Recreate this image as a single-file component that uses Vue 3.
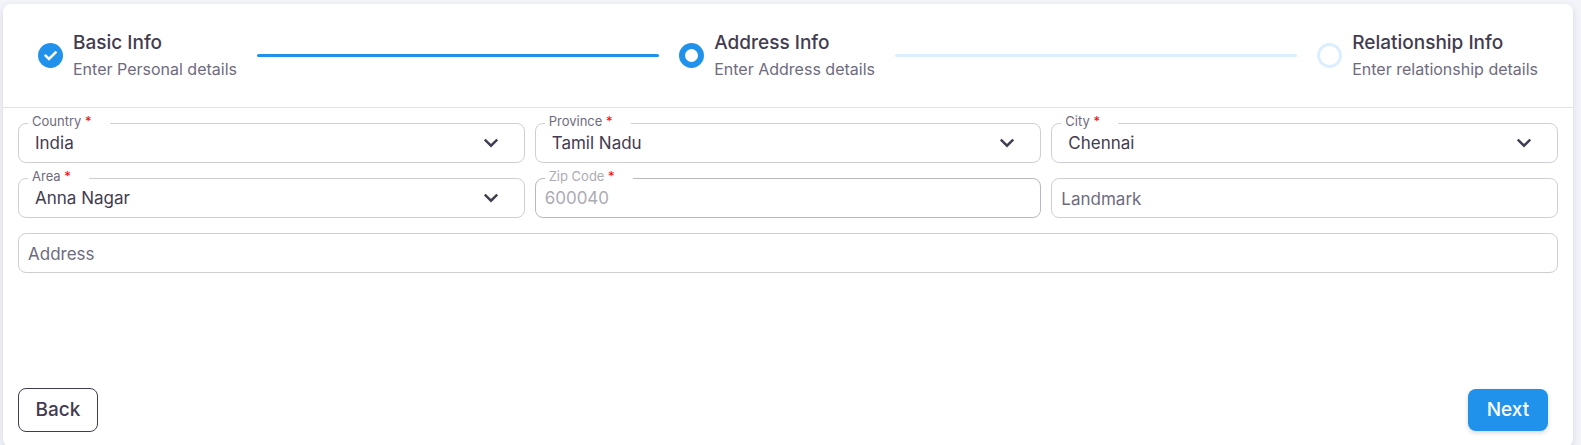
<template>
  <main class="page">
    <form class="card" @submit.prevent="next">
      <!-- stepper -->
      <ol class="stepper">
        <template v-for="(step, index) in steps" :key="step.title">
          <li class="step" :aria-current="index === current ? 'step' : null">
            <svg class="step-icon" viewBox="0 0 25 25" aria-hidden="true">
              <template v-if="index < current">
                <circle cx="12.5" cy="12.5" r="12.5" fill="#2092ec" />
                <path d="M6.8 11.8l4.2 4.2 7.4-7.4" fill="none" stroke="#fff" stroke-width="2.6" />
              </template>
              <circle v-else-if="index === current" cx="12.5" cy="12.5" r="9.5" fill="#fff" stroke="#2092ec" stroke-width="6" />
              <circle v-else cx="12.5" cy="12.5" r="11" fill="#fff" stroke="#dbeefd" stroke-width="3" />
            </svg>
            <div class="step-text">
              <div class="step-title">{{ step.title }}</div>
              <div class="step-subtitle">{{ step.subtitle }}</div>
            </div>
          </li>
          <li v-if="index < steps.length - 1" class="step-line" :class="{ done: index < current }" aria-hidden="true"></li>
        </template>
      </ol>

      <!-- address fields -->
      <div class="fields">
        <div v-for="field in fields" :key="field.id" class="field" :class="{ wide: field.wide, disabled: field.disabled }">
          <template v-if="field.options">
            <select :id="field.id" v-model="form[field.id]" class="control select" required>
              <option v-for="option in field.options" :key="option">{{ option }}</option>
            </select>
            <svg class="chevron" viewBox="0 0 14 10" aria-hidden="true">
              <path d="M0.8 1.5l6.2 6.2 6.2-6.2" fill="none" stroke="#433c50" stroke-width="2.4" />
            </svg>
          </template>
          <input
            v-else
            :id="field.id"
            v-model="form[field.id]"
            class="control"
            :class="{ plain: !field.required }"
            type="text"
            :placeholder="field.required ? null : field.label"
            :aria-label="field.required ? null : field.label"
            :disabled="field.disabled"
          />
          <label v-if="field.required" class="label" :for="field.id">
            {{ field.label }} <span class="star">*</span>
          </label>
        </div>
      </div>

      <div class="actions">
        <button class="btn back" type="button" @click="back">Back</button>
        <button class="btn next" type="submit">Next</button>
      </div>
    </form>
  </main>
</template>

<script setup>
import { reactive, ref } from 'vue'

const steps = [
  { title: 'Basic Info', subtitle: 'Enter Personal details' },
  { title: 'Address Info', subtitle: 'Enter Address details' },
  { title: 'Relationship Info', subtitle: 'Enter relationship details' },
]

const current = ref(1)

const fields = [
  { id: 'country', label: 'Country', required: true, options: ['India'] },
  { id: 'province', label: 'Province', required: true, options: ['Tamil Nadu'] },
  { id: 'city', label: 'City', required: true, options: ['Chennai'] },
  { id: 'area', label: 'Area', required: true, options: ['Anna Nagar'] },
  { id: 'zip', label: 'Zip Code', required: true, disabled: true },
  { id: 'landmark', label: 'Landmark' },
  { id: 'address', label: 'Address', wide: true },
]

const form = reactive({
  country: 'India',
  province: 'Tamil Nadu',
  city: 'Chennai',
  area: 'Anna Nagar',
  zip: '600040',
  landmark: '',
  address: '',
})

function back() {
  if (current.value > 0) current.value--
}

function next() {
  if (current.value < steps.length - 1) current.value++
}
</script>

<style>
body {
  background: #f3f4fa;
}
</style>

<style scoped>
.page {
  padding: 4px 8px 0 3px;
  font-family: Inter, "Open Sans", sans-serif;
  color: #433c50;
}

.card {
  background: #fff;
  border-radius: 8px;
  box-shadow: 0 2px 6px rgba(67, 60, 80, 0.16);
}

.stepper {
  display: flex;
  align-items: center;
  gap: 20px;
  margin: 0;
  padding: 24px 35px;
  list-style: none;
  border-bottom: 1px solid #e2e2e5;
}

.step {
  display: flex;
  align-items: center;
  gap: 10px;
  white-space: nowrap;
}

.step-icon {
  width: 25px;
  height: 25px;
}

.step-text {
  padding-top: 2px;
}

.step-title {
  font-size: 19px;
  font-weight: 500;
  line-height: 26px;
}

.step-subtitle {
  font-size: 16px;
  line-height: 27px;
  color: #6f6b7e;
}

.step-line {
  flex: 1;
  height: 3px;
  border-radius: 2px;
  background: #dbeefd;
}

.step-line.done {
  background: #2092ec;
}

.fields {
  display: grid;
  grid-template-columns: repeat(3, 1fr);
  gap: 15px 10px;
  padding: 15px;
}

.field {
  position: relative;
}

.wide {
  grid-column: 1 / -1;
}

.control {
  display: block;
  box-sizing: border-box;
  width: 100%;
  height: 40px;
  padding: 0 9px;
  border: 1px solid #cfced3;
  border-radius: 8px;
  background: #fff;
  font-family: inherit;
  font-size: 17px;
  color: #433c50;
}

.control::placeholder {
  color: #6f6b7e;
  opacity: 1;
}

.plain {
  padding-top: 2px;
}

.select {
  appearance: none;
  padding: 0 44px 0 16px;
}

.chevron {
  position: absolute;
  top: 15px;
  right: 27px;
  width: 14px;
  height: 10px;
  pointer-events: none;
}

/* sits over the top border of the control */
.label {
  position: absolute;
  top: -10px;
  left: 10px;
  padding: 0 18px 0 4px;
  background: #fff;
  font-size: 13px;
  line-height: 16px;
  color: #6f6b7e;
}

.star {
  color: #f00;
}

.disabled .control {
  border-color: #bab8c0;
  color: #adabb4;
}

.disabled .label {
  color: #adabb4;
}

.actions {
  display: flex;
  justify-content: space-between;
  align-items: center;
  padding: 100px 25px 15px 15px;
}

.btn {
  min-width: 80px;
  height: 42px;
  padding: 0 16px 2px;
  border: none;
  border-radius: 8px;
  font-family: inherit;
  font-size: 19px;
  font-weight: 500;
  cursor: pointer;
}

.back {
  height: 44px;
  border: 1px solid #433c50;
  background: #fff;
  color: #433c50;
}

.next {
  background: #2092ec;
  box-shadow: 0 2px 4px rgba(67, 60, 80, 0.2);
  color: #fff;
}
</style>
